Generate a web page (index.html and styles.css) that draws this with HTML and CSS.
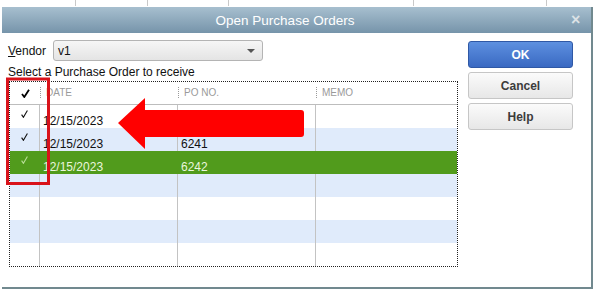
FILE: index.html
```html
<!DOCTYPE html>
<html lang="en">
<head>
  <meta charset="UTF-8">
  <title>Open Purchase Orders</title>
  <link rel="stylesheet" href="styles.css">
</head>
<body>
  <div class="backdrop"></div>

  <div class="window">
    <div class="titlebar">
      <span class="title">Open Purchase Orders</span>
      <span class="close">&times;</span>
    </div>

    <div class="content">
      <div class="main">
        <div class="vendor-row">
          <label class="vendor-label"><u>V</u>endor</label>
          <div class="select">
            <span>v1</span>
            <span class="caret"></span>
          </div>
        </div>
        <div class="hint">Select a Purchase Order to receive</div>

        <div class="grid">
          <div class="row head">
            <div class="cell c-check">
              <svg width="9" height="9" viewBox="0 0 9 9"><path d="M1 5 L3.3 8 L8 0.8" fill="none" stroke="#000" stroke-width="1.8"/></svg>
            </div>
            <div class="cell c-date">DATE</div>
            <div class="cell c-po">PO NO.</div>
            <div class="cell c-memo">MEMO</div>
          </div>

          <div class="row">
            <div class="cell c-check"><svg class="tick" width="7" height="8" viewBox="0 0 7 8"><path d="M0.6 4.6 L2.4 7.3 L6.4 0.5" fill="none" stroke="currentColor" stroke-width="1.1"/></svg></div>
            <div class="cell c-date">12/15/2023</div>
            <div class="cell c-po"></div>
            <div class="cell c-memo"></div>
          </div>
          <div class="row alt">
            <div class="cell c-check"><svg class="tick" width="7" height="8" viewBox="0 0 7 8"><path d="M0.6 4.6 L2.4 7.3 L6.4 0.5" fill="none" stroke="currentColor" stroke-width="1.1"/></svg></div>
            <div class="cell c-date">12/15/2023</div>
            <div class="cell c-po">6241</div>
            <div class="cell c-memo"></div>
          </div>
          <div class="row selected">
            <div class="cell c-check"><svg class="tick" width="7" height="8" viewBox="0 0 7 8"><path d="M0.6 4.6 L2.4 7.3 L6.4 0.5" fill="none" stroke="currentColor" stroke-width="1.1"/></svg></div>
            <div class="cell c-date">12/15/2023</div>
            <div class="cell c-po">6242</div>
            <div class="cell c-memo"></div>
          </div>
          <div class="row alt"><div class="cell c-check"></div><div class="cell c-date"></div><div class="cell c-po"></div><div class="cell c-memo"></div></div>
          <div class="row"><div class="cell c-check"></div><div class="cell c-date"></div><div class="cell c-po"></div><div class="cell c-memo"></div></div>
          <div class="row alt"><div class="cell c-check"></div><div class="cell c-date"></div><div class="cell c-po"></div><div class="cell c-memo"></div></div>
          <div class="row"><div class="cell c-check"></div><div class="cell c-date"></div><div class="cell c-po"></div><div class="cell c-memo"></div></div>
        </div>
      </div>

      <div class="buttons">
        <button class="btn btn-ok">OK</button>
        <button class="btn">Cancel</button>
        <button class="btn">Help</button>
      </div>
    </div>
  </div>

  <!-- annotation drawn over the dialog -->
  <svg class="markup" width="596" height="296" viewBox="0 0 596 296">
    <rect x="7.5" y="79" width="41" height="104.5" fill="none" stroke="#d9121a" stroke-width="3"/>
    <path d="M118 123 L145 98 L145 110 L301 110 Q304 110 304 113 L304 134 Q304 137 301 137 L145 137 L145 149 Z" fill="#ff0000"/>
  </svg>
</body>
</html>
```

FILE: styles.css
```css
body {
  margin: 0;
  font-family: "Liberation Sans", Arial, sans-serif;
  background: #fff;
  color: #111;
}

.backdrop {
  height: 7px;
  background-image:
    linear-gradient(#c9c9c9, #c9c9c9),
    linear-gradient(#c9c9c9, #c9c9c9),
    linear-gradient(#c9c9c9, #c9c9c9),
    linear-gradient(#c9c9c9, #c9c9c9),
    linear-gradient(#c9c9c9, #c9c9c9);
  background-size: 1px 6px;
  background-repeat: no-repeat;
  background-position: 75px 0, 147px 0, 228px 0, 413px 0, 546px 0;
}

.window {
  margin-left: 2px;
  width: 589px;
  border-right: 2px solid #71898f;
  border-bottom: 2px solid #71898f;
  background: #fff;
}

.titlebar {
  height: 26px;
  display: flex;
  align-items: center;
  background: linear-gradient(#a7bfcf, #7694aa);
  color: #fff;
}

.title {
  flex: 1;
  text-align: center;
  font-size: 13.5px;
}

.close {
  width: 20px;
  font-size: 16px;
  font-weight: bold;
  color: #dbe2e6;
  padding-left: 3px;
}

.content {
  display: flex;
  height: 254px;
}

.main {
  width: 454px;
  padding: 7px 0 0 6px;
}

.vendor-row {
  display: flex;
  align-items: center;
  height: 21px;
  font-size: 12px;
}

.vendor-label {
  width: 45px;
}

.select {
  width: 204px;
  height: 19px;
  border: 1px solid #b4b4b4;
  border-radius: 3px;
  background: linear-gradient(#f6f6f6, #e4e4e4);
  display: flex;
  align-items: center;
  padding-left: 4px;
}

.caret {
  margin-left: auto;
  margin-right: 7px;
  width: 0;
  height: 0;
  border-left: 4px solid transparent;
  border-right: 4px solid transparent;
  border-top: 4px solid #555;
}

.hint {
  font-size: 12px;
  line-height: 14px;
  margin: 4px 0 2px;
}

.grid {
  margin-left: 1px;
  width: 447px;
  border: 1px dotted #222;
}

.row {
  display: grid;
  grid-template-columns: 30px 138px 138px 1fr;
  height: 23px;
  font-size: 12px;
  background: #fff;
}

.row.alt { background: #e0ebfb; }

.row.selected {
  background: #519b1c;
  color: #eaf6dc;
}

.cell {
  border-right: 1px solid #c3c3c3;
  display: flex;
  align-items: flex-end;
  line-height: 14px;
  padding-left: 3px;
}

.cell.c-memo { border-right: none; }

.row.selected .cell { border-right-color: #519b1c; }

.cell.c-check {
  padding-left: 0;
  justify-content: center;
  align-items: flex-start;
  padding-top: 5px;
  color: #111;
}

.row.selected .c-check { color: #b9de98; }

.row.head {
  height: 22px;
  border-bottom: 1px solid #bdbdbd;
  font-size: 10px;
  color: #9a9a9a;
}

.row.head .cell {
  border-right: none;
  align-items: center;
  padding-left: 6px;
  background: repeating-linear-gradient(to bottom, #9a9a9a 0 1px, transparent 1px 2px) no-repeat left center / 1px 12px;
}

.row.head .cell.c-check {
  padding: 0;
  align-items: center;
  background: none;
}

.buttons {
  width: 105px;
  margin-left: 6px;
  padding-top: 8px;
  display: flex;
  flex-direction: column;
  gap: 4px;
}

.btn {
  height: 27px;
  border: 1px solid #c6c6c6;
  border-radius: 3px;
  background: linear-gradient(#fbfbfb, #e7e7e7);
  font-family: "Liberation Sans", Arial, sans-serif;
  font-size: 12px;
  font-weight: bold;
  color: #3c3c3c;
  padding: 0;
}

.btn-ok {
  background: linear-gradient(#5d90e0, #3a69c2);
  border-color: #2f58a5;
  color: #fff;
}

.markup {
  position: absolute;
  top: 0;
  left: 0;
  pointer-events: none;
}
```
